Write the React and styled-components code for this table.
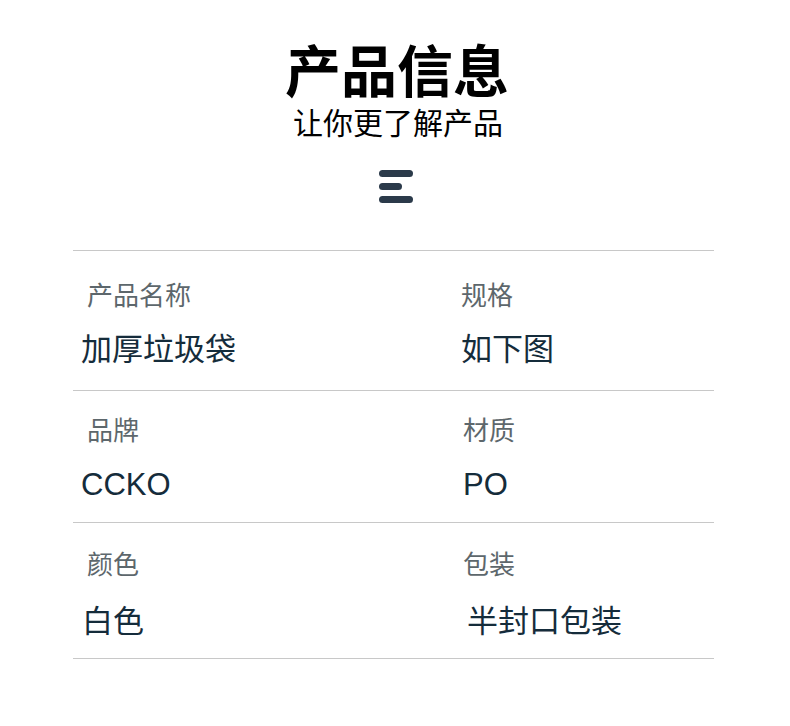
import React from "react";
import styled, { createGlobalStyle } from "styled-components";

const Global = createGlobalStyle`
  html, body { margin: 0; padding: 0; background: #ffffff; }
  body { font-family: "Liberation Sans", "Noto Sans CJK SC", sans-serif; }
`;

const Page = styled.div`
  width: 790px;
  padding-top: 40px;
  display: flex;
  flex-direction: column;
  align-items: center;
`;

const Title = styled.h1`
  margin: 0 0 0 4px;
  font-family: "Noto Sans CJK SC", sans-serif;
  font-size: 56px;
  line-height: 56px;
  font-weight: 700;
  color: #000;
`;

const Subtitle = styled.div`
  margin: 10px 0 0 6px;
  font-family: "Noto Sans CJK SC", sans-serif;
  font-size: 30px;
  line-height: 30px;
  color: #000;
`;

const MenuIcon = styled.svg`
  margin-top: 34px;
  margin-left: 2px;
  display: block;
`;

const Table = styled.div`
  align-self: flex-start;
  margin: 47px 0 0 73px;
  width: 641px;
  border-top: 1px solid #c8c8c8;
`;

const Row = styled.div`
  display: grid;
  grid-template-columns: 380px 1fr;
  border-bottom: 1px solid #c8c8c8;
  padding-top: ${(p) => p.$pt}px;
  padding-bottom: ${(p) => p.$pb}px;
`;

const Cell = styled.div`
  display: flex;
  flex-direction: column;
  align-items: flex-start;
  padding-left: 8px;
`;

const Label = styled.div`
  margin-left: ${(p) => p.$indent}px;
  font-family: "Noto Sans CJK SC", sans-serif;
  font-size: 26px;
  line-height: 25px;
  color: #5d676c;
`;

const Value = styled.div`
  margin-top: ${(p) => p.$gap}px;
  margin-left: ${(p) => p.$indent}px;
  font-family: "Liberation Sans", "Noto Sans CJK SC", sans-serif;
  font-size: 31px;
  line-height: 30px;
  color: #152c3b;
`;

const rows = [
  { pt: 30, gap: 29, pb: 25, items: [["产品名称", "加厚垃圾袋", 0], ["规格", "如下图", 0]] },
  { pt: 25, gap: 29, pb: 22, items: [["品牌", "CCKO", 0], ["材质", "PO", 2]] },
  { pt: 27, gap: 32, pb: 21, items: [["颜色", "白色", 1], ["包装", "半封口包装", 6]] },
];

export default function App() {
  return (
    <>
      <Global />
      <Page>
        <Title>产品信息</Title>
        <Subtitle>让你更了解产品</Subtitle>
        <MenuIcon width="34" height="33" viewBox="0 0 34 33">
          <rect x="0" y="0" width="34" height="7" rx="3.5" fill="#2b3a4a" />
          <rect x="0" y="13" width="23" height="7" rx="3.5" fill="#2b3a4a" />
          <rect x="0" y="26" width="34" height="7" rx="3.5" fill="#2b3a4a" />
        </MenuIcon>
        <Table>
          {rows.map((r, i) => (
            <Row key={i} $pt={r.pt} $pb={r.pb}>
              {r.items.map(([label, value, vi], j) => (
                <Cell key={j}>
                  <Label $indent={j === 0 ? 6 : i === 0 ? 0 : 2}>{label}</Label>
                  <Value $gap={r.gap} $indent={vi}>{value}</Value>
                </Cell>
              ))}
            </Row>
          ))}
        </Table>
      </Page>
    </>
  );
}
